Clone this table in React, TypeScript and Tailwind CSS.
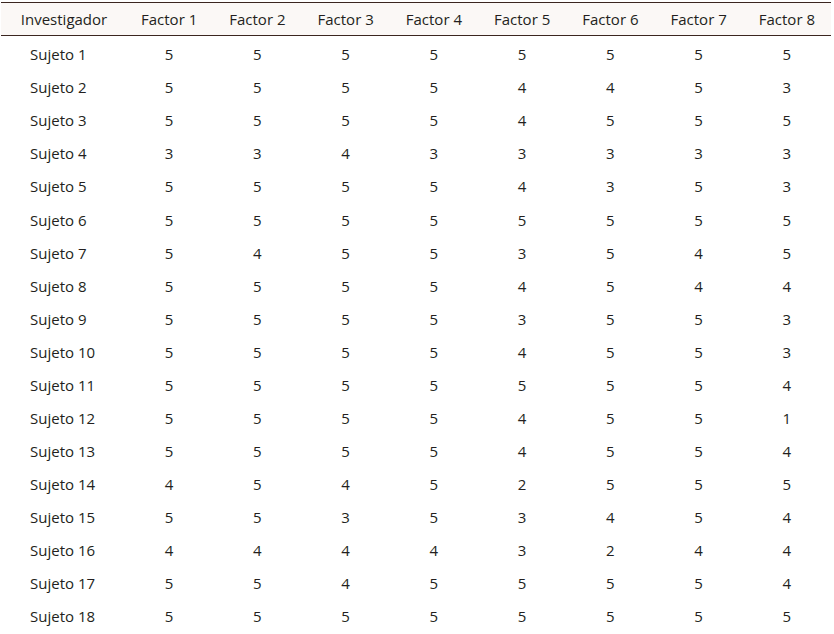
const rows: [string, number[]][] = [
  ["Sujeto 1", [5, 5, 5, 5, 5, 5, 5, 5]],
  ["Sujeto 2", [5, 5, 5, 5, 4, 4, 5, 3]],
  ["Sujeto 3", [5, 5, 5, 5, 4, 5, 5, 5]],
  ["Sujeto 4", [3, 3, 4, 3, 3, 3, 3, 3]],
  ["Sujeto 5", [5, 5, 5, 5, 4, 3, 5, 3]],
  ["Sujeto 6", [5, 5, 5, 5, 5, 5, 5, 5]],
  ["Sujeto 7", [5, 4, 5, 5, 3, 5, 4, 5]],
  ["Sujeto 8", [5, 5, 5, 5, 4, 5, 4, 4]],
  ["Sujeto 9", [5, 5, 5, 5, 3, 5, 5, 3]],
  ["Sujeto 10", [5, 5, 5, 5, 4, 5, 5, 3]],
  ["Sujeto 11", [5, 5, 5, 5, 5, 5, 5, 4]],
  ["Sujeto 12", [5, 5, 5, 5, 4, 5, 5, 1]],
  ["Sujeto 13", [5, 5, 5, 5, 4, 5, 5, 4]],
  ["Sujeto 14", [4, 5, 4, 5, 2, 5, 5, 5]],
  ["Sujeto 15", [5, 5, 3, 5, 3, 4, 5, 4]],
  ["Sujeto 16", [4, 4, 4, 4, 3, 2, 4, 4]],
  ["Sujeto 17", [5, 5, 4, 5, 5, 5, 5, 4]],
  ["Sujeto 18", [5, 5, 5, 5, 5, 5, 5, 5]],
];

const factors = [1, 2, 3, 4, 5, 6, 7, 8];

export default function App() {
  return (
    <div className="w-[834px] h-[634px] bg-white overflow-hidden font-['Open_Sans',sans-serif] text-[15px] text-[#231f20]">
      <div className="ml-px mt-[2px] w-[830px]">
        <div className="grid grid-cols-[124px_repeat(8,minmax(0,1fr))] h-[34px] items-center border-y border-[#3b2620] bg-[#fbf8f6]">
          <div className="text-center pl-[2px]">Investigador</div>
          {factors.map((f) => (
            <div key={f} className="text-center">
              Factor {f}
            </div>
          ))}
        </div>
        <div className="pt-[2px]">
          {rows.map(([name, vals]) => (
            <div key={name} className="grid grid-cols-[124px_repeat(8,minmax(0,1fr))] h-[33.06px] items-center">
              <div className="pl-[29px]">{name}</div>
              {vals.map((v, i) => (
                <div key={i} className="text-center">
                  {v}
                </div>
              ))}
            </div>
          ))}
        </div>
      </div>
    </div>
  );
}
